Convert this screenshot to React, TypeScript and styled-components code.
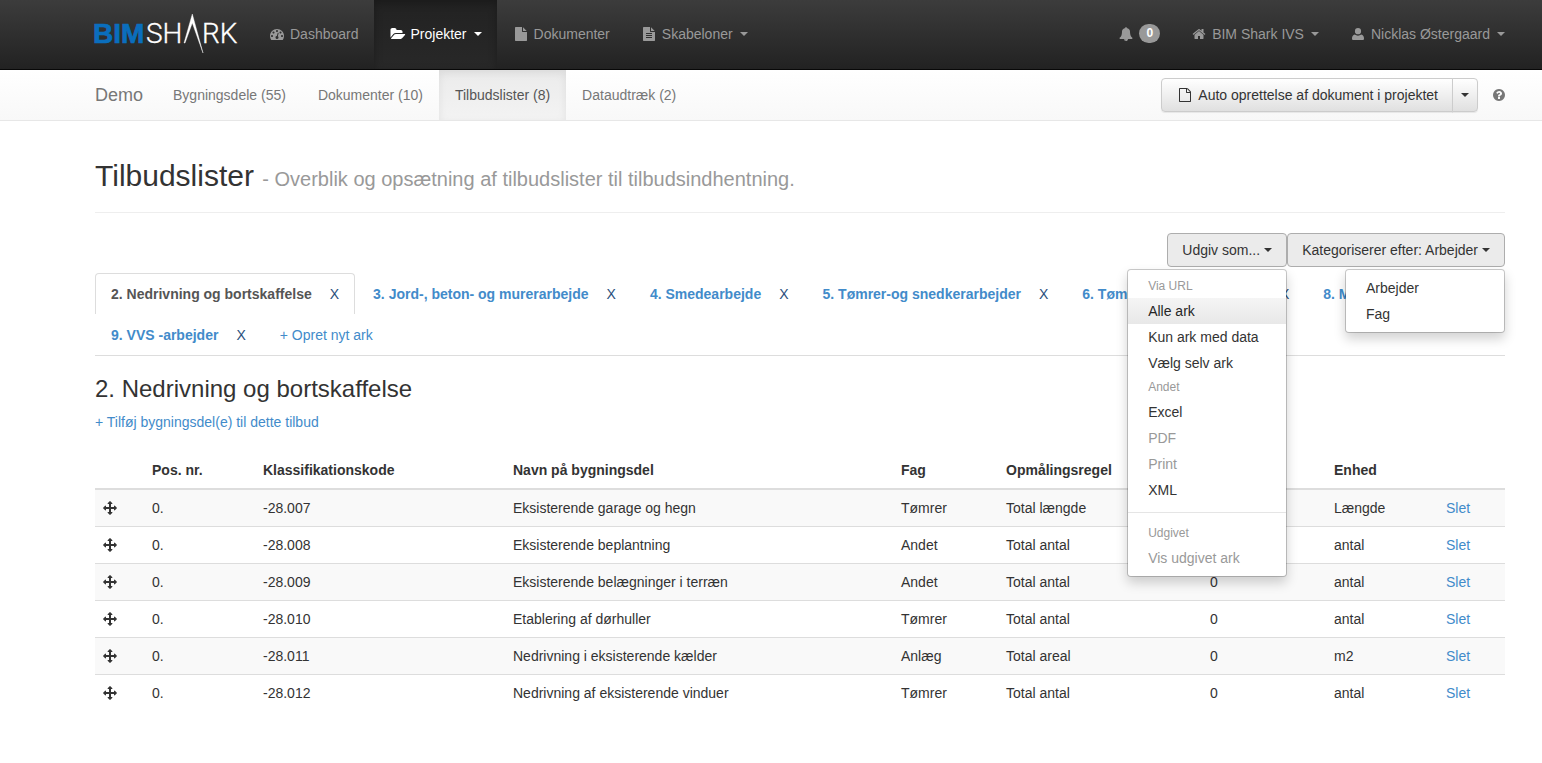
import React from 'react';
import styled, { createGlobalStyle, css } from 'styled-components';

const GlobalStyle = createGlobalStyle`
  *, *::before, *::after { box-sizing: border-box; }
  body {
    margin: 0;
    background: #fff;
    color: #333;
    font: 14px/20px "Liberation Sans", Arial, Helvetica, sans-serif;
  }
  button { font: inherit; cursor: pointer; }
  a { color: #428bca; text-decoration: none; }
`;

/* ---------- icons ---------- */

const glyphs = {
  dashboard:
    'M384 1152q0-53-37.5-90.5t-90.5-37.5-90.5 37.5-37.5 90.5 37.5 90.5 90.5 37.5 90.5-37.5 37.5-90.5zm192-448q0-53-37.5-90.5t-90.5-37.5-90.5 37.5-37.5 90.5 37.5 90.5 90.5 37.5 90.5-37.5 37.5-90.5zm428 481l101-382q6-26-7.5-48.5t-38.5-29.5-48 6.5-30 39.5l-101 382q-60 5-107 43.5t-63 98.5q-20 77 20 146t117 89 146-20 89-117q16-60-6-117t-72-91zm660-33q0-53-37.5-90.5t-90.5-37.5-90.5 37.5-37.5 90.5 37.5 90.5 90.5 37.5 90.5-37.5 37.5-90.5zm-640-640q0-53-37.5-90.5t-90.5-37.5-90.5 37.5-37.5 90.5 37.5 90.5 90.5 37.5 90.5-37.5 37.5-90.5zm448 192q0-53-37.5-90.5t-90.5-37.5-90.5 37.5-37.5 90.5 37.5 90.5 90.5 37.5 90.5-37.5 37.5-90.5zm320 448q0 261-141 483-19 29-54 29h-1402q-35 0-54-29-141-221-141-483 0-182 71-348t191-286 286-191 348-71 348 71 286 191 191 286 71 348z',
  folder:
    'M1815 952q0 31-31 66l-336 396q-43 51-120.5 86.5t-143.5 35.5h-1088q-34 0-60.5-13t-26.5-43q0-31 31-66l336-396q43-51 120.5-86.5t143.5-35.5h1088q34 0 60.5 13t26.5 43zm-343-344v160h-832q-94 0-197 47.5t-164 119.5l-337 396-5 6q0-4-.5-12.5t-.5-12.5v-960q0-92 66-158t158-66h320q92 0 158 66t66 158v32h544q92 0 158 66t66 158z',
  file:
    'M1152 512v-472q22 14 36 28l408 408q14 14 28 36h-472zm-128 32q0 40 28 68t68 28h544v1056q0 40-28 68t-68 28h-1344q-40 0-68-28t-28-68v-1600q0-40 28-68t68-28h800v544z',
  fileText:
    'M1596 476q14 14 28 36h-472v-472q22 14 36 28zm-476 164h544v1056q0 40-28 68t-68 28h-1344q-40 0-68-28t-28-68v-1600q0-40 28-68t68-28h800v544q0 40 28 68t68 28zm160 736v-64q0-14-9-23t-23-9h-704q-14 0-23 9t-9 23v64q0 14 9 23t23 9h704q14 0 23-9t9-23zm0-256v-64q0-14-9-23t-23-9h-704q-14 0-23 9t-9 23v64q0 14 9 23t23 9h704q14 0 23-9t9-23zm0-256v-64q0-14-9-23t-23-9h-704q-14 0-23 9t-9 23v64q0 14 9 23t23 9h704q14 0 23-9t9-23z',
  fileOutline:
    'M1596 380q28 28 48 76t20 88v1152q0 40-28 68t-68 28h-1344q-40 0-68-28t-28-68v-1600q0-40 28-68t68-28h896q40 0 88 20t76 48zm-444-244v376h376q-10-29-22-41l-313-313q-12-12-41-22zm384 1528v-1024h-416q-40 0-68-28t-28-68v-416h-768v1536h1280z',
  bell:
    'M912 1696q0-16-16-16-59 0-101.5-42.5t-42.5-101.5q0-16-16-16t-16 16q0 73 51.5 124.5t124.5 51.5q16 0 16-16zm816-288q0 52-38 90t-90 38h-448q0 106-75 181t-181 75-181-75-75-181h-448q-52 0-90-38t-38-90q50-42 91-88t85-119.5 74.5-158.5 50-206 19.5-260q0-152 117-282.5t307-158.5q-8-19-8-39 0-40 28-68t68-28 68 28 28 68q0 20-8 39 190 28 307 158.5t117 282.5q0 139 19.5 260t50 206 74.5 158.5 85 119.5 91 88z',
  home:
    'M1472 992v480q0 26-19 45t-45 19h-384v-384h-256v384h-384q-26 0-45-19t-19-45v-480q0-1 .5-3t.5-3l575-474 575 474q1 2 1 6zm223-69l-62 74q-8 9-21 11h-3q-13 0-21-7l-692-577-692 577q-12 8-24 7-13-2-21-11l-62-74q-8-10-7-23.5t11-21.5l719-599q32-26 76-26t76 26l244 204v-195q0-14 9-23t23-9h192q14 0 23 9t9 23v408l219 182q10 8 11 21.5t-7 23.5z',
  user:
    'M896 128a390 400 0 0 1 0 810a390 400 0 0 1 0-810zM128 1500q0-440 350-530q190 140 418 140t418-140q350 90 350 530v20q0 144-144 144h-1248q-144 0-144-144z',
  question:
    'M1024 1376v-192q0-14-9-23t-23-9h-192q-14 0-23 9t-9 23v192q0 14 9 23t23 9h192q14 0 23-9t9-23zm256-672q0-88-55.5-163t-138.5-116-170-41q-243 0-371 213-15 24 8 42l132 100q7 6 19 6 16 0 25-12 53-68 86-92 34-24 86-24 48 0 85.5 26t37.5 59q0 38-20 61t-68 45q-63 28-115.5 86.5t-52.5 125.5v36q0 14 9 23t23 9h192q14 0 23-9t9-23q0-19 21.5-49.5t54.5-49.5q32-18 49-28.5t46-35 44.5-48 28-60.5 12.5-81zm384 192q0 209-103 385.5t-279.5 279.5-385.5 103-385.5-103-279.5-279.5-103-385.5 103-385.5 279.5-279.5 385.5-103 385.5 103 279.5 279.5 103 385.5z',
  move:
    'M1792 896q0 26-19 45l-256 256q-19 19-45 19t-45-19-19-45v-128h-384v384h128q26 0 45 19t19 45-19 45l-256 256q-19 19-45 19t-45-19l-256-256q-19-19-19-45t19-45 45-19h128v-384h-384v128q0 26-19 45t-45 19-45-19l-256-256q-19-19-19-45t19-45l256-256q19-19 45-19t45 19 19 45v128h384v-384h-128q-26 0-45-19t-19-45 19-45l256-256q19-19 45-19t45 19l256 256q19 19 19 45t-19 45-45 19h-128v384h384v-128q0-26 19-45t45-19 45 19l256 256q19 19 19 45z',
};

type IconName = keyof typeof glyphs;

const IconSvg = styled.svg`
  display: block;
  flex: none;
  width: 14px;
  height: 14px;
  margin: 0 2px;
  fill: currentColor;
  overflow: visible;
`;

const Icon = ({ name }: { name: IconName }) => (
  <IconSvg viewBox="0 0 1792 1792" aria-hidden="true">
    <path d={glyphs[name]} />
  </IconSvg>
);

const Caret = styled.span`
  display: inline-block;
  flex: none;
  border: 4px solid transparent;
  border-top-color: currentColor;
  border-bottom: 0;
`;

/* ---------- top bar ---------- */

const TopBar = styled.header`
  display: flex;
  height: 70px;
  padding: 0 22px 0 95px;
  border-bottom: 1px solid #080808;
  background: linear-gradient(#3c3c3c, #222);
`;

const Logo = styled.a`
  display: block;
  padding: 8px 13px 0 0;
  svg { display: block; overflow: visible; }
`;

const Menu = styled.nav<{ $right?: boolean }>`
  display: flex;
  ${p => p.$right && css`margin-left: auto;`}
`;

const MenuLink = styled.a<{ $active?: boolean }>`
  display: flex;
  align-items: center;
  gap: 4px;
  padding: 0 15px 2px;
  color: #999;
  white-space: nowrap;
  ${p => p.$active && css`
    color: #fff;
    background: linear-gradient(#222, #282828);
    box-shadow: inset 0 3px 9px rgba(0, 0, 0, 0.25);
  `}
  ${Caret} { margin-left: 3px; }
`;

const Badge = styled.span`
  padding: 3px 7px;
  border-radius: 10px;
  background: #999;
  color: #fff;
  font-size: 12px;
  font-weight: bold;
  line-height: 13px;
`;

/* ---------- project bar ---------- */

const ProjectBar = styled.div`
  display: flex;
  align-items: center;
  height: 51px;
  padding: 0 37px 0 95px;
  border-bottom: 1px solid #e7e7e7;
  background: linear-gradient(#fff, #f8f8f8);
`;

const ProjectName = styled.a`
  padding-right: 14px;
  color: #777;
  font-size: 18px;
`;

const SubMenu = styled.nav`
  display: flex;
  align-self: stretch;
  margin-right: auto;
`;

const SubLink = styled.a<{ $active?: boolean }>`
  display: flex;
  align-items: center;
  padding: 0 16px;
  color: #777;
  white-space: nowrap;
  ${p => p.$active && css`
    color: #555;
    background: linear-gradient(#ebebeb, #f3f3f3);
    box-shadow: inset 0 3px 9px rgba(0, 0, 0, 0.075);
  `}
`;

const SplitButton = styled.div`
  display: flex;
  margin-right: 13px;
`;

const Button = styled.button<{ $open?: boolean }>`
  display: flex;
  align-items: center;
  gap: 4px;
  height: 34px;
  padding: 0 14px;
  border: 1px solid #ccc;
  border-radius: 4px;
  background: linear-gradient(#fff, #e0e0e0);
  box-shadow: inset 0 1px 0 rgba(255, 255, 255, 0.15), 0 1px 1px rgba(0, 0, 0, 0.075);
  color: #333;
  white-space: nowrap;
  ${p => p.$open && css`
    border-color: #adadad;
    background: #ebebeb;
    box-shadow: none;
  `}
  ${SplitButton} > &:first-child { border-radius: 4px 0 0 4px; }
  ${SplitButton} > &:last-child {
    margin-left: -1px;
    padding: 0 8px;
    border-radius: 0 4px 4px 0;
  }
`;

const HelpButton = styled.button`
  padding: 0;
  border: 0;
  background: none;
  color: #777;
  ${IconSvg} { margin: 0 -1px 0 1px; }
`;

/* ---------- page ---------- */

const Page = styled.main`
  padding: 38px 37px 40px 95px;
`;

const Title = styled.h1`
  margin: 0 0 20px;
  padding-bottom: 16px;
  border-bottom: 1px solid #eee;
  font-size: 30px;
  font-weight: normal;
  line-height: 34px;
  small { color: #999; font-size: 20px; }
`;

const Actions = styled.div`
  display: flex;
  justify-content: flex-end;
  margin-bottom: 6px;
`;

const Dropdown = styled.div`
  position: relative;
`;

const DropList = styled.ul`
  position: absolute;
  z-index: 10;
  top: 100%;
  right: 0;
  width: 160px;
  margin: 2px 0 0;
  padding: 5px 0;
  border: 1px solid rgba(0, 0, 0, 0.2);
  border-radius: 4px;
  background: #fff;
  background-clip: padding-box;
  box-shadow: 0 6px 12px rgba(0, 0, 0, 0.175);
  list-style: none;
`;

const DropHeader = styled.li`
  padding: 3px 20px;
  color: #999;
  font-size: 12px;
  line-height: 17px;
`;

const DropDivider = styled.li`
  height: 1px;
  margin: 9px 0;
  background: #e5e5e5;
`;

const DropLink = styled.a<{ $hot?: boolean; $disabled?: boolean }>`
  display: block;
  padding: 3px 20px;
  color: ${p => (p.$disabled ? '#999' : '#333')};
  white-space: nowrap;
  ${p => p.$hot && css`
    color: #262626;
    background: linear-gradient(#f5f5f5, #e8e8e8);
  `}
`;

const Tabs = styled.ul`
  display: flex;
  flex-wrap: wrap;
  margin: 0 0 20px;
  padding: 0;
  border-bottom: 1px solid #ddd;
  list-style: none;
`;

const Tab = styled.li<{ $active?: boolean }>`
  display: flex;
  gap: 18px;
  height: 41px;
  margin-right: 2px;
  padding: 10px 15px;
  border: 1px solid transparent;
  border-bottom: 0;
  border-radius: 4px 4px 0 0;
  white-space: nowrap;
  ${p => p.$active && css`border-color: #ddd;`}
`;

const TabName = styled.a<{ $active?: boolean }>`
  font-weight: bold;
  color: ${p => (p.$active ? '#555' : '#428bca')};
`;

const TabClose = styled.button`
  padding: 0;
  border: 0;
  background: none;
  color: #2a4f7c;
`;

const SheetTitle = styled.h2`
  margin: 0 0 10px;
  font-size: 24px;
  font-weight: normal;
  line-height: 26px;
`;

const Table = styled.table`
  width: 100%;
  margin-top: 20px;
  border-spacing: 0;
  table-layout: fixed;
  th, td { padding: 8px; text-align: left; }
  th { border-bottom: 2px solid #ddd; }
  tbody tr + tr td { border-top: 1px solid #ddd; }
  tbody tr:nth-child(odd) td { background: #f9f9f9; }
`;

const Col = styled.col<{ $w?: number }>`
  ${p => p.$w && css`width: ${p.$w}px;`}
`;

const Handle = styled.button`
  display: flex;
  align-items: center;
  height: 20px;
  padding: 0;
  border: 0;
  background: none;
  color: #333;
  ${IconSvg} { margin: 0; }
`;

/* ---------- data ---------- */

const sheets = [
  '2. Nedrivning og bortskaffelse',
  '3. Jord-, beton- og murerarbejde',
  '4. Smedearbejde',
  '5. Tømrer-og snedkerarbejder',
  '6. Tømrer',
  '7. Gulve',
  '8. Maler',
  '9. VVS -arbejder',
];

const rows = [
  ['-28.007', 'Eksisterende garage og hegn', 'Tømrer', 'Total længde', 'Længde'],
  ['-28.008', 'Eksisterende beplantning', 'Andet', 'Total antal', 'antal'],
  ['-28.009', 'Eksisterende belægninger i terræn', 'Andet', 'Total antal', 'antal'],
  ['-28.010', 'Etablering af dørhuller', 'Tømrer', 'Total antal', 'antal'],
  ['-28.011', 'Nedrivning i eksisterende kælder', 'Anlæg', 'Total areal', 'm2'],
  ['-28.012', 'Nedrivning af eksisterende vinduer', 'Tømrer', 'Total antal', 'antal'],
];

const Brand = () => (
  <Logo href="#" aria-label="BIMSHARK">
    <svg width="145" height="50" viewBox="0 0 145 50">
      <text x="-2" y="35" fill="#0a6ebd" stroke="#0a6ebd" strokeWidth="0.7" fontFamily="Liberation Sans, Arial, sans-serif" fontWeight="bold" fontSize="28">BIM</text>
      <g fill="#fff" stroke="#fff" strokeWidth="0.3" fontFamily="Roboto, sans-serif" fontWeight="300" fontSize="28">
        <text x="51" y="35">SH</text>
        <text x="107" y="35">RK</text>
      </g>
      <path d="M89 35 L97.300 6 L108 45 L97.300 15 L90 35 Z" fill="#fff" stroke="#fff" strokeWidth="0.4" />
    </svg>
  </Logo>
);

const App = () => (
  <>
    <GlobalStyle />
    <TopBar>
      <Brand />
      <Menu>
        <MenuLink href="#"><Icon name="dashboard" />Dashboard</MenuLink>
        <MenuLink href="#" $active><Icon name="folder" />Projekter<Caret /></MenuLink>
        <MenuLink href="#"><Icon name="file" />Dokumenter</MenuLink>
        <MenuLink href="#"><Icon name="fileText" />Skabeloner<Caret /></MenuLink>
      </Menu>
      <Menu $right>
        <MenuLink href="#"><Icon name="bell" /><Badge>0</Badge></MenuLink>
        <MenuLink href="#"><Icon name="home" />BIM Shark IVS<Caret /></MenuLink>
        <MenuLink href="#"><Icon name="user" />Nicklas Østergaard<Caret /></MenuLink>
      </Menu>
    </TopBar>

    <ProjectBar>
      <ProjectName href="#">Demo</ProjectName>
      <SubMenu>
        <SubLink href="#">Bygningsdele (55)</SubLink>
        <SubLink href="#">Dokumenter (10)</SubLink>
        <SubLink href="#" $active>Tilbudslister (8)</SubLink>
        <SubLink href="#">Dataudtræk (2)</SubLink>
      </SubMenu>
      <SplitButton>
        <Button><Icon name="fileOutline" />Auto oprettelse af dokument i projektet</Button>
        <Button aria-label="Flere valg"><Caret /></Button>
      </SplitButton>
      <HelpButton aria-label="Hjælp"><Icon name="question" /></HelpButton>
    </ProjectBar>

    <Page>
      <Title>Tilbudslister <small>- Overblik og opsætning af tilbudslister til tilbudsindhentning.</small></Title>

      <Actions>
        <Dropdown>
          <Button $open aria-expanded="true">Udgiv som... <Caret /></Button>
          <DropList>
            <DropHeader>Via URL</DropHeader>
            <li><DropLink href="#" $hot>Alle ark</DropLink></li>
            <li><DropLink href="#">Kun ark med data</DropLink></li>
            <li><DropLink href="#">Vælg selv ark</DropLink></li>
            <DropHeader>Andet</DropHeader>
            <li><DropLink href="#">Excel</DropLink></li>
            <li><DropLink href="#" $disabled>PDF</DropLink></li>
            <li><DropLink href="#" $disabled>Print</DropLink></li>
            <li><DropLink href="#">XML</DropLink></li>
            <DropDivider role="separator" />
            <DropHeader>Udgivet</DropHeader>
            <li><DropLink href="#" $disabled>Vis udgivet ark</DropLink></li>
          </DropList>
        </Dropdown>
        <Dropdown>
          <Button $open aria-expanded="true">Kategoriserer efter: Arbejder <Caret /></Button>
          <DropList>
            <li><DropLink href="#">Arbejder</DropLink></li>
            <li><DropLink href="#">Fag</DropLink></li>
          </DropList>
        </Dropdown>
      </Actions>

      <Tabs>
        {sheets.map((name, i) => (
          <Tab key={name} $active={i === 0}>
            <TabName href="#" $active={i === 0}>{name}</TabName>
            <TabClose aria-label={`Slet ${name}`}>X</TabClose>
          </Tab>
        ))}
        <Tab><a href="#">+ Opret nyt ark</a></Tab>
      </Tabs>

      <SheetTitle>2. Nedrivning og bortskaffelse</SheetTitle>
      <a href="#">+ Tilføj bygningsdel(e) til dette tilbud</a>

      <Table>
        <colgroup>
          <Col $w={49} /><Col $w={111} /><Col $w={250} /><Col /><Col $w={105} />
          <Col $w={204} /><Col $w={124} /><Col $w={112} /><Col $w={67} />
        </colgroup>
        <thead>
          <tr>
            <th /><th>Pos. nr.</th><th>Klassifikationskode</th><th>Navn på bygningsdel</th>
            <th>Fag</th><th>Opmålingsregel</th><th>Mængde</th><th>Enhed</th><th />
          </tr>
        </thead>
        <tbody>
          {rows.map(([code, name, trade, rule, unit]) => (
            <tr key={code}>
              <td><Handle aria-label="Flyt række"><Icon name="move" /></Handle></td>
              <td>0.</td>
              <td>{code}</td>
              <td>{name}</td>
              <td>{trade}</td>
              <td>{rule}</td>
              <td>0</td>
              <td>{unit}</td>
              <td><a href="#">Slet</a></td>
            </tr>
          ))}
        </tbody>
      </Table>
    </Page>
  </>
);

export default App;
